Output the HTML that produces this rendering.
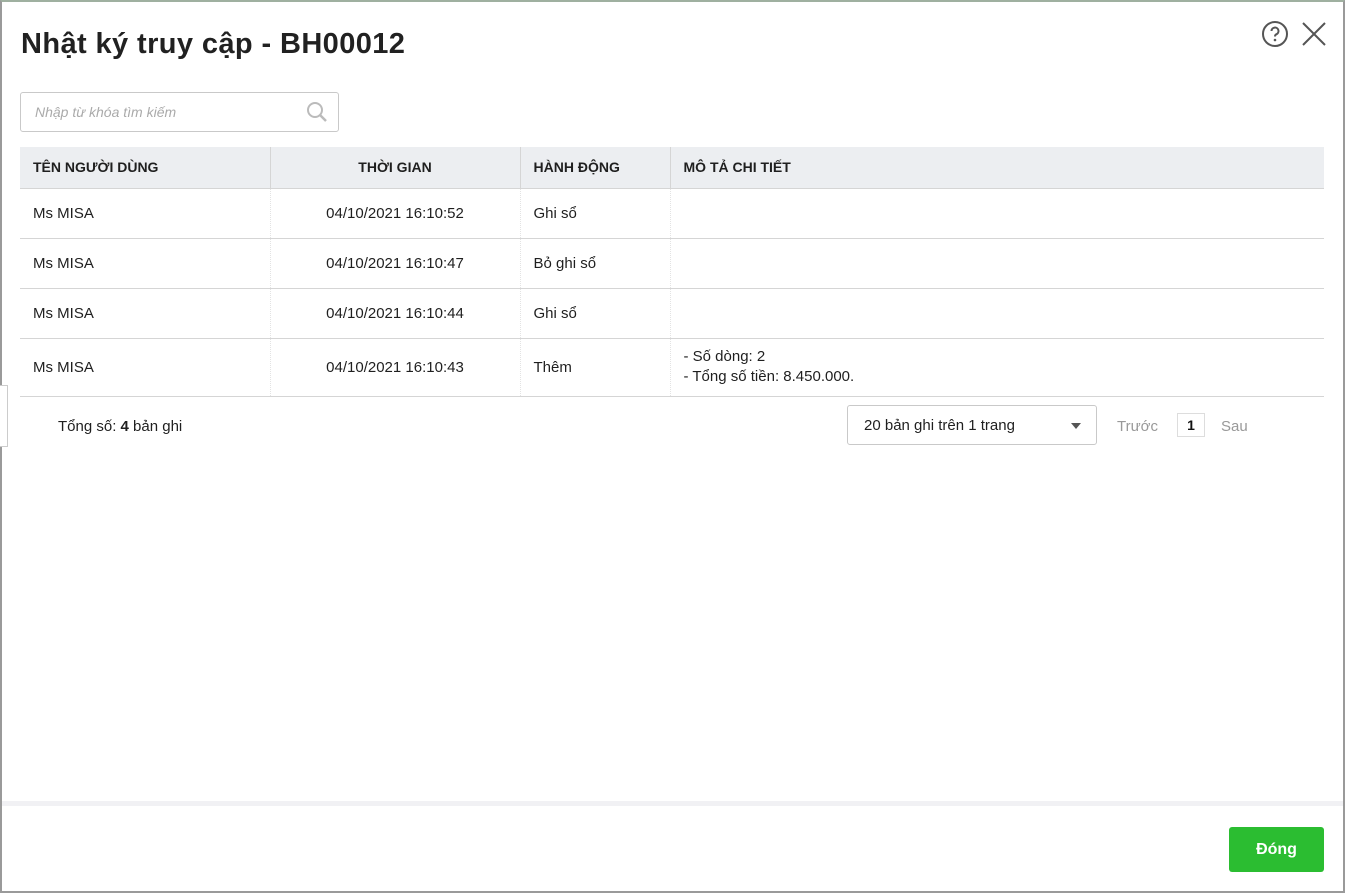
<!DOCTYPE html>
<html><head><meta charset="utf-8"><style>
*{box-sizing:border-box;margin:0;padding:0}
body{width:1345px;height:893px;overflow:hidden;background:#fff;font-family:"Liberation Sans","Noto Sans CJK SC",sans-serif;color:#1f1f1f;position:relative}
.frame{position:absolute;left:0;top:0;width:1345px;height:893px;border:2px solid #9a9a9a;border-top-color:#9fb0a0}
h1{position:absolute;left:21px;top:28px;font-size:29px;font-weight:bold;color:#212121;letter-spacing:0.4px}
.search{position:absolute;left:20px;top:92px;width:319px;height:40px;border:1px solid #c9c9c9;border-radius:3px}
.search span{position:absolute;left:14px;top:11px;font-size:14px;font-style:italic;color:#aaa}
table{position:absolute;left:20px;top:147px;width:1304px;border-collapse:collapse;font-size:15px}
th{background:#eceef1;height:41px;text-align:left;padding-left:13px;font-size:14px;font-weight:bold;border-bottom:1px solid #d5d5d5;border-right:1px solid #d5d5d5}
td{height:50px;padding-left:13px;border-bottom:1px solid #d5d5d5;border-right:1px dotted #e3e3e3}
th:last-child,td:last-child{border-right:none}
.c{text-align:center;padding-left:0}
.total{position:absolute;left:58px;top:418px;font-size:15px}
.sel{position:absolute;left:847px;top:405px;width:250px;height:40px;border:1px solid #c9c9c9;border-radius:3px;font-size:15px;padding:11px 0 0 16px}
.sel i{position:absolute;right:15px;top:17px;border-left:5px solid transparent;border-right:5px solid transparent;border-top:6px solid #555}
.pg{position:absolute;top:418px;font-size:15px;color:#999}
.pn{position:absolute;left:1177px;top:413px;width:28px;height:24px;border:1px solid #ddd;text-align:center;font-weight:bold;font-size:14px;padding-top:3px;color:#111}
.sep{position:absolute;left:2px;top:801px;width:1341px;height:5px;background:#f1f1f4}
.btn{position:absolute;left:1229px;top:827px;width:95px;height:45px;background:#2bbd31;border-radius:3px;color:#fff;font-weight:bold;font-size:16px;text-align:center;padding-top:14px}
.tab{position:absolute;left:0;top:385px;width:8px;height:62px;border:1px solid #ccc;border-left:none;background:#fff}
</style></head><body>
<div class="frame"></div>
<div class="tab"></div>
<h1>Nhật ký truy cập - BH00012</h1>
<svg style="position:absolute;left:1261px;top:20px" width="28" height="28" viewBox="0 0 28 28"><circle cx="14" cy="14" r="12" fill="none" stroke="#555" stroke-width="2"/><path d="M10.5 11a3.5 3.5 0 1 1 4.8 3.3c-0.9 .4-1.3 1-1.3 2.2" fill="none" stroke="#555" stroke-width="2"/><circle cx="14" cy="20" r="1.3" fill="#555"/></svg>
<svg style="position:absolute;left:1302px;top:22px" width="24" height="24" viewBox="0 0 24 24"><path d="M1 1L23 23M23 1L1 23" stroke="#555" stroke-width="2"/></svg>
<div class="search"><span>Nhập từ khóa tìm kiếm</span>
<svg style="position:absolute;right:10px;top:8px" width="22" height="22" viewBox="0 0 22 22"><circle cx="9" cy="9" r="7" fill="none" stroke="#bbb" stroke-width="2"/><path d="M14 14L20 20" stroke="#bbb" stroke-width="2.5"/></svg></div>
<table>
<tr><th style="width:250px">TÊN NGƯỜI DÙNG</th><th class="c" style="width:250px">THỜI GIAN</th><th style="width:150px">HÀNH ĐỘNG</th><th>MÔ TẢ CHI TIẾT</th></tr>
<tr><td>Ms MISA</td><td class="c">04/10/2021 16:10:52</td><td>Ghi sổ</td><td></td></tr>
<tr><td>Ms MISA</td><td class="c">04/10/2021 16:10:47</td><td>Bỏ ghi sổ</td><td></td></tr>
<tr><td>Ms MISA</td><td class="c">04/10/2021 16:10:44</td><td>Ghi sổ</td><td></td></tr>
<tr><td style="height:58px">Ms MISA</td><td class="c">04/10/2021 16:10:43</td><td>Thêm</td><td style="line-height:20px">- Số dòng: 2<br>- Tổng số tiền: 8.450.000.</td></tr>
</table>
<div class="total">Tổng số: <b>4</b> bản ghi</div>
<div class="sel">20 bản ghi trên 1 trang<i></i></div>
<div class="pg" style="left:1117px">Trước</div>
<div class="pn">1</div>
<div class="pg" style="left:1221px">Sau</div>
<div class="sep"></div>
<div class="btn">Đóng</div>
</body></html>
